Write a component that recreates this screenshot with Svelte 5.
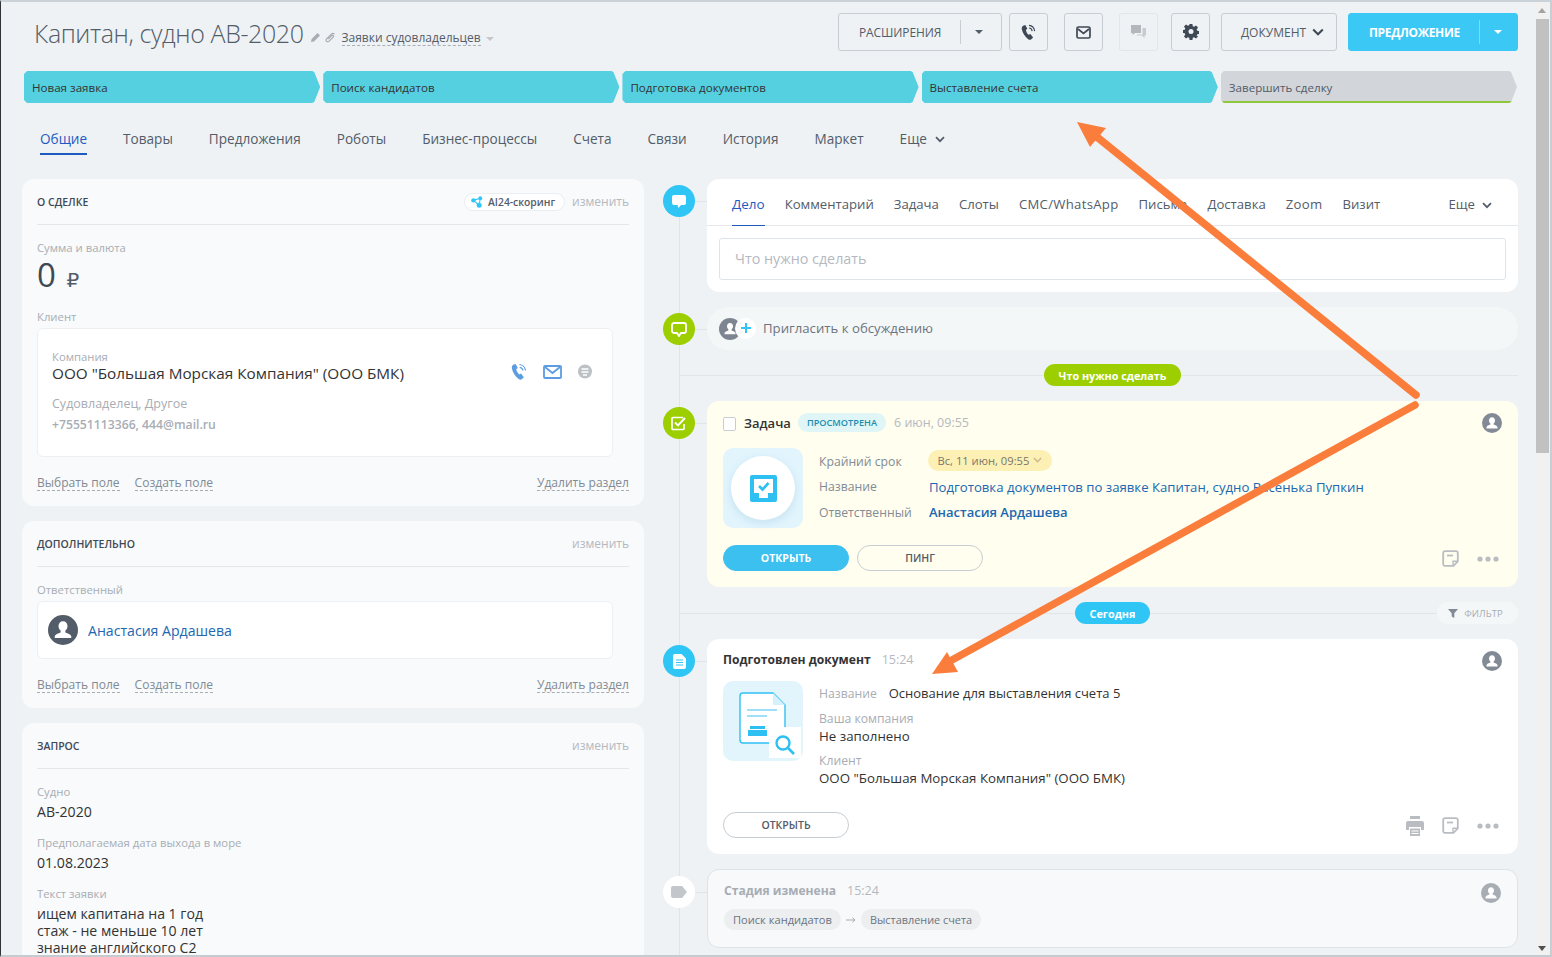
<script>
  const stages = [
    { name: 'Новая заявка' }, { name: 'Поиск кандидатов' }, { name: 'Подготовка документов' }, { name: 'Выставление счета' }, { name: 'Завершить сделку', end: true }
  ];
  const tabs = ['Товары', 'Предложения', 'Роботы', 'Бизнес-процессы', 'Счета', 'Связи', 'История', 'Маркет'];
  const actTabs = ['Комментарий', 'Задача', 'Слоты', 'СМС/WhatsApp', 'Письма', 'Доставка', 'Zoom', 'Визит'];
</script>

{#snippet chevron(w, color)}
  <svg class="chev" width={w} height={w * 0.7} viewBox="0 0 10 7"><path d="M1 1.2 5 5.2 9 1.2" fill="none" stroke={color} stroke-width="1.7"/></svg>
{/snippet}
{#snippet person(color)}
  <svg width="20" height="20" viewBox="0 0 20 20"><circle cx="10" cy="10" r="10" fill={color}/><path d="M10 4.2c-1.9 0-3 1.4-3 3.2 0 1.3.6 2.4 1.4 3v1.2c-1.600.6-3.600 1.200-3.900 2.600v1.200h11v-1.200c-.3-1.400-2.300-2-3.900-2.600v-1.200c.8-.6 1.400-1.700 1.400-3 0-1.800-1.100-3.200-3-3.200z" fill="#fff"/></svg>
{/snippet}
{#snippet note()}
  <svg width="17" height="17" viewBox="0 0 17 17"><path d="M3 1.200h11a1.800 1.800 0 0 1 1.800 1.800v8.500l-4.300 4.300H3A1.800 1.800 0 0 1 1.200 14V3A1.800 1.800 0 0 1 3 1.200z" fill="none" stroke="#b9bdc2" stroke-width="1.800"/><path d="M5 5.500h6" stroke="#b9bdc2" stroke-width="1.800"/><path d="M11 15.500V11.200h4.500" fill="none" stroke="#b9bdc2" stroke-width="1.400"/></svg>
{/snippet}
{#snippet dots()}
  <svg width="22" height="6" viewBox="0 0 22 6"><circle cx="3" cy="3" r="2.600" fill="#b9bdc2"/><circle cx="11" cy="3" r="2.600" fill="#b9bdc2"/><circle cx="19" cy="3" r="2.600" fill="#b9bdc2"/></svg>
{/snippet}
{#snippet phone(color, w)}
  <svg width={w} height={w} viewBox="0 0 18 18"><path d="M3.200 1.800 5.600 1l2.200 4-1.600 1.300c.4 1.900 1.500 3.900 3 5.200l1.800-.9 2.900 3.600-1.900 1.900c-.8.700-2 .8-3 .2C5.300 13.500 2.700 9.500 1.900 5.500c-.2-1.500.2-3 1.300-3.700z" fill={color}/><path d="M9.500 1.500c3 .3 5.600 2.800 6 6M9.700 4.300c1.600.2 3 1.500 3.200 3.200" fill="none" stroke={color} stroke-width="1.200"/></svg>
{/snippet}

<div class="window">
  <div class="page">
    <header class="head">
      <h1>Капитан, судно АВ-2020</h1>
      <svg class="pen" width="11" height="11" viewBox="0 0 11 11"><path d="M1 10l.6-3L7.500 1l2.500 2.500L4 9.400z" fill="#a8adb4"/></svg>
      <svg class="clip" width="11" height="11" viewBox="0 0 11 11"><path d="M9.500 1.500a2.200 2.200 0 0 0-3.100 0L1.500 6.400a1.700 1.700 0 0 0 2.400 2.400l4.300-4.300a1 1 0 0 0-1.500-1.500L3.300 6.500" fill="none" stroke="#a8adb4" stroke-width="1.200" transform="translate(0 .6)"/></svg>
      <span class="cat">Заявки судовладельцев</span>
      <span class="caret-grey"></span>
      <div class="actions">
        <div class="btn ext"><span>РАСШИРЕНИЯ</span><i class="sep"></i><b class="caret-dark"></b></div>
        <div class="btn sq mr16">{@render phone('#3f4855', 17)}</div>
        <div class="btn sq mr16"><svg width="15" height="13" viewBox="0 0 15 13"><rect x="1" y="1" width="13" height="11" rx="1.500" fill="none" stroke="#3f4855" stroke-width="1.700"/><path d="M2 3l5.500 4.500L13 3" fill="none" stroke="#3f4855" stroke-width="1.700"/></svg></div>
        <div class="btn sq mr13 off"><svg width="17" height="16" viewBox="0 0 17 16"><path d="M1 1h10v8H5L2.500 11V9H1z" fill="#b4b8bd"/><path d="M12.500 4H16v7.500h-1.500V14L12 11.500H7V10.500h5.500z" fill="#c8cbcf"/></svg></div>
        <div class="btn sq mr11"><svg width="16" height="16" viewBox="0 0 16 16"><path d="M6.600 0h2.800l.4 2.200 1.300.6L13 1.500l2 2-1.300 1.900.6 1.300 2.200.4v2.800l-2.200.4-.6 1.300L15 12.500l-2 2-1.900-1.300-1.300.6-.4 2.200H6.600l-.4-2.200-1.300-.6L3 14.500l-2-2 1.300-1.900-.6-1.300L-.5 8.900V6.100l2.200-.4.6-1.300L1 2.500l2-2 1.900 1.300 1.300-.6z" fill="#3f4855"/><circle cx="8" cy="7.500" r="2.500" fill="#eef2f4"/></svg></div>
        <div class="btn doc"><span>ДОКУМЕНТ</span>{@render chevron(12, '#3f4855')}</div>
        <div class="btn offer"><span>ПРЕДЛОЖЕНИЕ</span><i class="sep light"></i><b class="caret-white"></b></div>
      </div>
    </header>

    <div class="stages">
      {#each stages as s}
        <div class="stage" class:end={s.end}><span>{s.name}</span></div>
      {/each}
    </div>

    <nav class="tabs">
      <span class="tab active">Общие</span>
      {#each tabs as t}<span class="tab">{t}</span>{/each}
      <span class="tab more">Еще {@render chevron(10, '#535c69')}</span>
    </nav>

    <main class="cols">
      <section class="left">
        <div class="card c1">
          <div class="card-head"><h2>О сделке</h2>
            <span class="ai"><svg width="12" height="12" viewBox="0 0 11 11"><circle cx="2.200" cy="4" r="2" fill="#2fc6f6"/><circle cx="8.500" cy="2" r="1.800" fill="#2fc6f6"/><circle cx="7.500" cy="8.500" r="2.300" fill="#2fc6f6"/><path d="M2.200 4 8.500 2M2.200 4l5.300 4.500M8.500 2l-1 6.500" stroke="#2fc6f6"/></svg>AI24-скоринг</span>
            <span class="edit">изменить</span></div>
          <div class="lbl l-sum">Сумма и валюта</div>
          <div class="sum">0 <small>₽</small></div>
          <div class="lbl l-client">Клиент</div>
          <div class="box client">
            <div class="cl-top">
              <div><div class="lbl">Компания</div><div class="cname">ООО "Большая Морская Компания" (ООО БМК)</div></div>
              <div class="cicons">
                {@render phone('#5c9ce0', 18)}
                <svg width="19" height="14" viewBox="0 0 19 14"><rect x="1" y="1" width="17" height="12" rx="1" fill="none" stroke="#5c9ce0" stroke-width="1.800"/><path d="M2 2l7.500 6L17 2" fill="none" stroke="#5c9ce0" stroke-width="1.800"/></svg>
                <svg width="16" height="16" viewBox="0 0 16 16"><circle cx="8" cy="7.500" r="7" fill="#bcc1c5"/><path d="M4.500 5h7M4.500 8h7M6 11h4" stroke="#fff" stroke-width="1.300"/></svg>
              </div>
            </div>
            <div class="csub">Судовладелец, Другое</div>
            <div class="ccontact">+75551113366, 444@mail.ru</div>
          </div>
          <div class="foot"><span>Выбрать поле</span><span>Создать поле</span><span class="del">Удалить раздел</span></div>
        </div>

        <div class="card c2">
          <div class="card-head"><h2>Дополнительно</h2><span class="edit">изменить</span></div>
          <div class="lbl l-resp">Ответственный</div>
          <div class="box resp">
            <svg width="30" height="30" viewBox="0 0 20 20"><circle cx="10" cy="10" r="10" fill="#535c69"/><path d="M10 4.200c-1.900 0-3 1.400-3 3.200 0 1.300.6 2.400 1.400 3v1.200c-1.600.6-3.600 1.200-3.900 2.600v1.200h11v-1.200c-.3-1.400-2.300-2-3.900-2.600v-1.200c.8-.6 1.400-1.700 1.400-3 0-1.800-1.100-3.200-3-3.200z" fill="#fff"/></svg>
            <span class="rname">Анастасия Ардашева</span>
          </div>
          <div class="foot"><span>Выбрать поле</span><span>Создать поле</span><span class="del">Удалить раздел</span></div>
        </div>

        <div class="card c3">
          <div class="card-head"><h2>Запрос</h2><span class="edit">изменить</span></div>
          <div class="lbl f1">Судно</div><div class="val">АВ-2020</div>
          <div class="lbl f2">Предполагаемая дата выхода в море</div><div class="val">01.08.2023</div>
          <div class="lbl f2">Текст заявки</div>
          <div class="val multi">ищем капитана на 1 год<br>стаж - не меньше 10 лет<br>знание английского С2</div>
        </div>
      </section>

      <section class="right">
        <div class="item i-new">
          <div class="mark blue"><svg width="14" height="13" viewBox="0 0 14 13"><path d="M2 0h10a2 2 0 0 1 2 2v6a2 2 0 0 1-2 2H9l-2.500 3-1-3H2a2 2 0 0 1-2-2V2a2 2 0 0 1 2-2z" fill="#fff"/></svg></div>
          <div class="card-w editor">
            <div class="ed-tabs">
              <span class="ed-tab active">Дело</span>
              {#each actTabs as t}<span class="ed-tab" class:wa={t === 'СМС/WhatsApp'} class:zm={t === 'Zoom'}>{t}</span>{/each}
              <span class="ed-tab ed-more">Еще {@render chevron(10, '#535c69')}</span>
            </div>
            <div class="input">Что нужно сделать</div>
          </div>
        </div>

        <div class="item i-inv">
          <div class="mark green"><svg width="16" height="15" viewBox="0 0 16 15"><path d="M3 1h10a2 2 0 0 1 2 2v6a2 2 0 0 1-2 2h-3l-2 3-2-3H3a2 2 0 0 1-2-2V3a2 2 0 0 1 2-2z" fill="none" stroke="#fff" stroke-width="1.800"/></svg></div>
          <div class="invite">
            <span class="inv-ic">
              <svg width="22" height="22" viewBox="0 0 22 22"><circle cx="11" cy="11" r="11" fill="#7d8590"/><path d="M11 5c-1.900 0-3 1.400-3 3.200 0 1.300.6 2.400 1.400 3v1.200c-1.600.6-3.600 1.200-3.900 2.600v1.200h11V15c-.3-1.400-2.300-2-3.900-2.600v-1.200c.8-.6 1.400-1.700 1.400-3C14 6.400 12.900 5 11 5z" fill="#fff"/></svg>
              <span class="plus"><svg width="12" height="12" viewBox="0 0 12 12"><path d="M6 1v10M1 6h10" stroke="#2fc6f6" stroke-width="2"/></svg></span>
            </span>
            <span>Пригласить к обсуждению</span>
          </div>
        </div>

        <div class="divider d1"><span class="pill lime">Что нужно сделать</span></div>

        <div class="item i-task">
          <div class="mark green"><svg width="16" height="15" viewBox="0 0 16 15"><path d="M13 8v4.500a1 1 0 0 1-1 1H2a1 1 0 0 1-1-1v-10a1 1 0 0 1 1-1h10" fill="none" stroke="#fff" stroke-width="1.700"/><path d="M4 6.500l3 3 7-7.500" fill="none" stroke="#fff" stroke-width="1.900"/></svg></div>
          <div class="tcard task">
            <div class="t-head">
              <span class="chk"></span>
              <span class="t-title">Задача</span>
              <span class="seen">ПРОСМОТРЕНА</span>
              <span class="time">6 июн, 09:55</span>
              <span class="who">{@render person('#828b95')}</span>
            </div>
            <div class="t-body">
              <div class="illu">
                <span class="circle"><svg width="27" height="27" viewBox="0 0 27 27"><rect width="27" height="27" rx="2" fill="#2fc0f3"/><path d="M4 4h19v14h-5v5H9v-5H4z" fill="#fff"/><path d="M9 11l3.500 3.500L18.500 8" fill="none" stroke="#2fc0f3" stroke-width="2.600"/></svg></span>
              </div>
              <div class="fields">
                <div class="f-row"><span class="k">Крайний срок</span><span class="dead">Вс, 11 июн, 09:55 {@render chevron(9, '#c9b98a')}</span></div>
                <div class="f-row"><span class="k">Название</span><span class="link">Подготовка документов по заявке Капитан, судно Васенька Пупкин</span></div>
                <div class="f-row"><span class="k">Ответственный</span><span class="link strong">Анастасия Ардашева</span></div>
              </div>
            </div>
            <div class="t-foot">
              <span class="rbtn fill">ОТКРЫТЬ</span>
              <span class="rbtn">ПИНГ</span>
              <span class="tools">{@render note()}{@render dots()}</span>
            </div>
          </div>
        </div>

        <div class="divider d2"><span class="pill sky">Сегодня</span>
          <span class="filter"><svg width="10" height="9" viewBox="0 0 10 9"><path d="M0 0h10L6.300 4.300V9L3.700 7.500V4.300z" fill="#828b95"/></svg>ФИЛЬТР</span>
        </div>

        <div class="item i-doc">
          <div class="mark blue"><svg width="13" height="15" viewBox="0 0 13 15"><path d="M2 0h6.500L13 4.500V13a2 2 0 0 1-2 2H2a2 2 0 0 1-2-2V2a2 2 0 0 1 2-2z" fill="#fff"/><path d="M3 6h7M3 8.500h7M3 11h7" stroke="#2fc6f6" stroke-width="1.200"/></svg></div>
          <div class="tcard doc-card">
            <div class="t-head">
              <span class="d-title">Подготовлен документ</span>
              <span class="time d-time">15:24</span>
              <span class="who">{@render person('#828b95')}</span>
            </div>
            <div class="t-body dbody">
              <div class="illu">
                <svg class="docsvg" width="80" height="80" viewBox="0 0 80 80">
                  <path d="M20 12h30l12 12v35a3 3 0 0 1-3 3H20a3 3 0 0 1-3-3V15a3 3 0 0 1 3-3z" fill="#fff" stroke="#2fc0f3" stroke-width="1.400"/>
                  <path d="M50 12v12h12z" fill="#d4f1fc"/>
                  <path d="M24 29h30M24 35h20" stroke="#9fe0f8" stroke-width="2"/>
                  <path d="M27 45h15v3H27zM25 49h19v6H25z" fill="#2fc0f3"/>
                  <rect x="46" y="46" width="32" height="31" fill="#fff"/>
                  <circle cx="60" cy="62" r="6.500" fill="none" stroke="#2fc0f3" stroke-width="2.400"/><path d="M65 67l6 6" stroke="#2fc0f3" stroke-width="2.600"/>
                </svg>
              </div>
              <div class="dfields">
                <div class="d-row"><span class="k">Название</span><span class="dv">Основание для выставления счета 5</span></div>
                <div class="k d-l">Ваша компания</div><div class="dv v2">Не заполнено</div>
                <div class="k d-l">Клиент</div><div class="dv v2">ООО "Большая Морская Компания" (ООО БМК)</div>
              </div>
            </div>
            <div class="t-foot dfoot">
              <span class="rbtn">ОТКРЫТЬ</span>
              <span class="tools">
                <svg width="18" height="20" viewBox="0 0 18 20"><path d="M4 0h10v3H4zM2 5h14a2 2 0 0 1 2 2v7h-3v-3H3v3H0V7a2 2 0 0 1 2-2z" fill="#b9bdc2"/><path d="M4 12.500h10V20H4z" fill="#b9bdc2"/><path d="M5.500 15h7M5.500 17.500h7" stroke="#fff" stroke-width="1.200"/></svg>
                {@render note()}{@render dots()}
              </span>
            </div>
          </div>
        </div>

        <div class="item i-stage">
          <div class="mark white"><svg width="16" height="12" viewBox="0 0 16 12"><path d="M2 0h9l5 6-5 6H2a2 2 0 0 1-2-2V2a2 2 0 0 1 2-2z" fill="#c3c7cb"/></svg></div>
          <div class="tcard stagec">
            <div class="t-head sh">
              <span class="s-title">Стадия изменена</span>
              <span class="time">15:24</span>
              <span class="who">{@render person('#a8adb4')}</span>
            </div>
            <div class="chips">
              <span class="chip">Поиск кандидатов</span>
              <svg width="10" height="6" viewBox="0 0 10 6"><path d="M0 3h9M6.500.8 9 3 6.500 5.200" fill="none" stroke="#a8adb4"/></svg>
              <span class="chip second">Выставление счета</span>
            </div>
          </div>
        </div>
      </section>
    </main>

    <svg class="arrows" width="1534" height="957" viewBox="0 0 1534 957" aria-hidden="true">
      <path d="M1416 395 1097 137" fill="none" stroke="#fb7d3c" stroke-width="7.500" stroke-linecap="round"/>
      <path d="M1077 122 1106 128 1090 147z" fill="#fb7d3c"/>
      <path d="M1415 405 952 660" fill="none" stroke="#fb7d3c" stroke-width="7.500" stroke-linecap="round"/>
      <path d="M932 674 947 652 958 672z" fill="#fb7d3c"/>
    </svg>
  </div>
  <aside class="scrollbar">
    <span class="up"></span>
    <span class="thumb"></span>
    <span class="down"></span>
  </aside>
</div>

<style>
  :global(body) { margin: 0; background: #eef2f4; }
  * { box-sizing: border-box; }
  .window { position: relative; width: 1552px; height: 957px; display: flex; overflow: hidden; font-family: "Open Sans", "Noto Sans", sans-serif; color: #333; border-top: 2px solid #ccd3d8; border-left: 1px solid #30343a; border-bottom: 2px solid #c5ccd1; }
  .window::before { content: ""; position: absolute; left: -1px; top: 15px; width: 1px; height: 38px; background: #8a7fb8; z-index: 2; }
  .page { position: relative; flex: 1; min-width: 0; background: #eef2f4; }
  .scrollbar { width: 18px; background: #f1f1f1; border-right: 2px solid #c9ced2; display: flex; flex-direction: column; align-items: center; padding: 0 2px; }
  .up { width: 0; height: 0; border: 4px solid transparent; border-top: 0; border-bottom: 5px solid #a3a3a3; margin: 6px 0 6px; }
  .thumb { width: 13px; height: 434px; background: #c1c1c1; }
  .down { width: 0; height: 0; border: 4px solid transparent; border-bottom: 0; border-top: 5px solid #505050; margin-top: auto; margin-bottom: 4px; }

  .head { display: flex; align-items: center; height: 38px; margin-top: 11px; padding: 0 16px 0 33px; }
  h1 { margin: 2px 0 0; font-size: 25px; font-weight: 300; color: #535c69; letter-spacing: -.4px; white-space: nowrap; line-height: 38px; }
  .pen { margin-left: 6px; margin-top: 11px; }
  .clip { margin-left: 4px; margin-top: 10px; }
  .cat { margin-left: 6px; margin-top: 12px; font-size: 12px; color: #535c69; border-bottom: 1px dashed #a8adb4; line-height: 15px; }
  .caret-grey { margin-left: 5px; margin-top: 13px; border: 4px solid transparent; border-bottom: 0; border-top: 4px solid #c3c7cb; }
  .actions { display: flex; margin-left: auto; }
  .btn { height: 38px; border: 1px solid #c6cdd3; border-radius: 3px; display: flex; align-items: center; justify-content: center; font-size: 12px; font-weight: 500; color: #535c69; white-space: nowrap; }
  .ext { width: 164px; margin-right: 7px; padding-left: 20px; justify-content: flex-start; letter-spacing: -.1px; }
  .sep { width: 1px; height: 24px; background: #c6cdd3; margin-left: 19px; }
  .caret-dark { margin-left: 14px; border: 4px solid transparent; border-bottom: 0; border-top: 4px solid #535c69; }
  .caret-white { margin-left: 14px; border: 4px solid transparent; border-bottom: 0; border-top: 4px solid #fff; }
  .sq { width: 39px; }
  .mr16 { margin-right: 16px; }
  .mr13 { margin-right: 13px; }
  .mr11 { margin-right: 11px; }
  .off { border-color: #e2e6e9; }
  .doc { width: 116px; margin-right: 11px; gap: 6px; padding-left: 7px; }
  .offer { width: 170px; background: #3bc8f5; border-color: #3bc8f5; color: #fff; font-weight: 700; justify-content: flex-start; padding-left: 20px; letter-spacing: -.35px; }
  .sep.light { background: #7bdbf8; margin-left: 19px; }

  .stages { display: flex; gap: 3px; margin: 20px 17px 0 23px; height: 32px; }
  .stage { flex: 1; background: #55d0e0; display: flex; align-items: center; padding-left: 8px; font-size: 11.600px; font-weight: 500; color: #333; clip-path: polygon(3px 0, calc(100% - 8px) 0, calc(100% - 6px) 1px, 100% 50%, calc(100% - 6px) calc(100% - 1px), calc(100% - 8px) 100%, 3px 100%, 0 calc(100% - 3px), 0 3px); }
  .stage.end { background: #d2d5da; color: #535c69; box-shadow: inset 0 -2px 0 #8fc73a; }

  .tabs { display: flex; gap: 36px; margin-top: 22px; padding-left: 39px; height: 30px; font-size: 13.580px; font-weight: 500; color: #535c69; }
  .tab { white-space: nowrap; line-height: 28px; height: 30px; }
  .tab.active { color: #1f5ac0; border-bottom: 2px solid #1f5ac0; }
  .more { display: flex; align-items: center; gap: 8px; height: 28px; }

  .cols { display: flex; margin-top: 24px; padding-left: 21px; gap: 19px; }
  .left { width: 622px; flex: none; display: flex; flex-direction: column; gap: 15px; }
  .right { flex: 1; margin-right: 16px; position: relative; }
  .right::before { content: ""; position: absolute; left: 16px; top: 20px; bottom: -100px; width: 1px; background: #dfe5e8; }

  .card { background: #f8fafb; border-radius: 12px; padding: 0 15px; position: relative; }
  .c1 { height: 327px; }
  .c2 { height: 187px; }
  .c3 { height: 300px; }
  .card-head { height: 46px; border-bottom: 1px solid #e4e8ea; display: flex; align-items: center; }
  h2 { margin: 0; font-size: 10.500px; font-weight: 600; text-transform: uppercase; color: #3f4855; margin-right: auto; }
  .ai { display: flex; align-items: center; gap: 5px; height: 18px; padding: 0 9px 0 6px; background: #fff; border: 1px solid #e9eef1; border-radius: 9px; font-size: 10.300px; font-weight: 600; color: #535c69; margin-right: 7px; }
  .edit { font-size: 12px; color: #b5b9bf; }
  .lbl { font-size: 11.300px; color: #a8adb4; line-height: 14px; }
  .l-sum { margin-top: 16px; }
  .sum { font-size: 33px; font-weight: 400; color: #3f4855; line-height: 40px; margin-top: 0; }
  .sum small { font-size: 20px; font-family: "DejaVu Sans", sans-serif; color: #535c69; margin-left: 2px; }
  .l-client { margin-top: 10px; }
  .box { background: #fff; border: 1px solid #edf0f2; border-radius: 6px; margin-right: 16px; }
  .client { height: 129px; margin-top: 4px; padding: 21px 19px 0 14px; }
  .cl-top { display: flex; justify-content: space-between; align-items: center; }
  .cname { font-size: 15.300px; color: #333; line-height: 18px; }
  .cicons { display: flex; align-items: center; gap: 15px; margin-top: 12px; }
  .csub { font-size: 12.500px; color: #a8adb4; margin-top: 12px; line-height: 20px; }
  .ccontact { font-size: 12.200px; font-weight: 600; color: #a8adb4; line-height: 20px; margin-top: 1px; }
  .foot { position: absolute; left: 15px; right: 15px; bottom: 15px; display: flex; gap: 15px; font-size: 12.050px; color: #828b95; line-height: 15px; }
  .foot span { border-bottom: 1px dashed #a8adb4; }
  .foot .del { margin-left: auto; }
  .l-resp { margin-top: 16px; }
  .resp { height: 58px; margin-top: 4px; display: flex; align-items: center; gap: 10px; padding-left: 10px; }
  .rname { font-size: 14.100px; color: #2067b0; }
  .f1 { margin-top: 16px; }
  .f2 { margin-top: 14px; }
  .val { font-size: 14.100px; color: #333; line-height: 20px; margin-top: 3px; }
  .multi { line-height: 17px; margin-top: 4px; }

  .item { display: flex; gap: 12px; position: relative; }
  .mark { width: 32px; height: 32px; border-radius: 50%; display: flex; align-items: center; justify-content: center; flex: none; position: relative; margin-top: 6px; }
  .mark::after { content: ""; position: absolute; left: 32px; top: 16px; width: 12px; height: 1px; background: #dfe5e8; }
  .blue { background: #2fc6f6; }
  .green { background: #9dcf00; }
  .white { background: #fff; }
  .card-w { flex: 1; background: #fff; border-radius: 12px; }
  .editor { height: 113px; }
  .ed-tabs { height: 47px; border-bottom: 1px solid #e4e8ea; padding: 0 26px 0 25px; display: flex; gap: 20px; font-size: 13.150px; color: #535c69; }
  .ed-tab { line-height: 50px; height: 47px; white-space: nowrap; }
  .ed-tab.active { color: #1f5ac0; border-bottom: 1px solid #1f5ac0; font-size: 13.500px; }
  .wa { letter-spacing: .3px; }
  .zm { letter-spacing: .3px; }
  .ed-more { margin-left: auto; display: flex; align-items: center; gap: 7px; line-height: 1; padding-top: 5px; }
  .input { height: 42px; margin: 12px 12px 0; border: 1px solid #dfe4e8; border-radius: 3px; padding-left: 15px; line-height: 40px; font-size: 14.300px; color: #b5b9bf; }
  .i-inv { margin-top: 15px; }
  .i-inv .mark { margin-top: 6px; }
  .invite { flex: 1; height: 43px; border-radius: 22px; background: #f4f7f8; display: flex; align-items: center; gap: 12px; padding: 0 0 2px 12px; font-size: 13.200px; color: #6b7480; }
  .inv-ic { position: relative; width: 32px; height: 22px; flex: none; margin-top: 2px; }
  .plus { position: absolute; left: 16px; top: 0; width: 21px; height: 21px; background: #fff; border-radius: 50%; display: flex; align-items: center; justify-content: center; }

  .divider { position: relative; height: 22px; display: flex; justify-content: center; padding-left: 44px; }
  .divider::before { content: ""; position: absolute; left: 16px; right: 0; top: 11px; height: 1px; background: #dfe5e8; }
  .d2::before { right: 81px; }
  .d1 { margin-top: 14px; }
  .d2 { margin-top: 15px; }
  .pill { position: relative; height: 22px; border-radius: 11px; color: #fff; font-size: 10.800px; font-weight: 700; line-height: 24px; padding: 0 15px; }
  .lime { background: #9dcf00; }
  .sky { background: #2fc6f6; }
  .filter { position: absolute; right: 0; top: 0; width: 81px; height: 22px; border-radius: 11px; background: #f4f7f8; color: #a8adb4; font-size: 9.500px; font-weight: 500; display: flex; align-items: center; justify-content: center; gap: 6px; padding-right: 4px; }

  .i-task { margin-top: 15px; }
  .i-doc { margin-top: 15px; }
  .i-stage { margin-top: 15px; }
  .i-stage .mark { margin-top: 7px; }
  .tcard { flex: 1; border-radius: 12px; background: #fff; position: relative; padding: 0 16px; }
  .task { height: 186px; background: #fffeef; }
  .doc-card { height: 215px; }
  .stagec { height: 79px; background: #f7f9fa; border: 1px solid #dfe3e6; }
  .t-head { height: 47px; display: flex; align-items: center; font-size: 12.500px; padding-bottom: 4px; }
  .who { margin-left: auto; display: flex; margin-top: 0; }
  .chk { width: 13px; height: 14px; background: #fff; border: 1px solid #c6cdd3; border-radius: 2px; margin: 2px 8px 0 0; }
  .t-title { font-size: 13px; font-weight: 600; color: #333; margin-right: 7px; }
  .seen { height: 19px; border-radius: 10px; background: #e0f5f5; color: #1c8fb0; font-size: 9.200px; font-weight: 600; line-height: 20px; padding: 0 9px; margin-right: 8px; }
  .time { color: #b5b9bf; font-size: 12.500px; }
  .t-body { display: flex; gap: 16px; }
  .illu { width: 80px; height: 80px; background: #e2f5fd; border-radius: 10px; display: flex; align-items: center; justify-content: center; flex: none; }
  .circle { width: 64px; height: 64px; background: #fff; border-radius: 50%; display: flex; align-items: center; justify-content: center; box-shadow: 0 3px 10px rgba(47,130,180,.16); }
  .fields { padding-top: .4px; }
  .f-row { display: flex; height: 25.500px; align-items: center; font-size: 13.180px; }
  .k { color: #a8adb4; font-size: 12.200px; }
  .f-row .k { width: 110px; flex: none; color: #828b95; }
  .dead { background: #fdf0b5; height: 21px; border-radius: 11px; padding: 0 9.500px; display: flex; align-items: center; gap: 4px; font-size: 11.200px; color: #77776a; font-weight: 500; margin: -1px 0 0 -1px; }
  .link { color: #2067b0; }
  .strong { font-weight: 600; font-size: 13px; }
  .t-foot { position: absolute; left: 16px; right: 19px; bottom: 16px; display: flex; align-items: center; gap: 8px; }
  .rbtn { width: 126px; height: 26px; border: 1px solid #c6cdd3; border-radius: 13px; background: transparent; text-align: center; line-height: 24px; font-size: 10.500px; font-weight: 600; color: #535c69; }
  .rbtn.fill { background: #3bc0f0; border-color: #3bc0f0; color: #fff; font-weight: 700; }
  .tools { margin-left: auto; display: flex; align-items: center; gap: 18px; margin-top: 1px; }
  .d-title { font-size: 12.100px; font-weight: 700; color: #333; margin-right: 11px; }
  .doc-card .t-head { padding-bottom: 6px; }
  .doc-card .who { margin-top: 2px; }
  .dbody { margin-top: -5px; }
  .dfields { padding-top: 3px; font-size: 13px; }
  .d-row { display: flex; gap: 12px; line-height: 18px; align-items: baseline; }
  .d-l { margin-top: 7px; line-height: 18px; }
  .dv { color: #333; font-size: 13px; line-height: 18px; }
  .v2 { margin-top: -1px; font-size: 13.300px; }
  .s-title { font-size: 12.100px; font-weight: 700; color: #a8adb4; margin-right: 11px; }
  .sh { height: 40px; padding: 0; margin-left: 0; }
  .sh .who { margin-top: 5px; }
  .chips { display: flex; align-items: center; gap: 5px; margin-top: -1px; }
  .chip { height: 21px; background: #eceef0; border-radius: 11px; padding: 0 9px; font-size: 11.100px; line-height: 21px; color: #6b7480; }
  .chip.second { font-size: 10.900px; }
  .arrows { position: absolute; left: -1px; top: -2px; pointer-events: none; }
</style>
